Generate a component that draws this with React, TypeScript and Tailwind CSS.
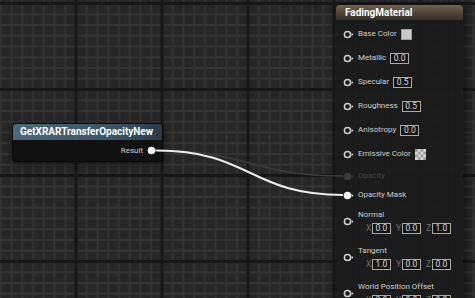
import React from "react";

const font = "font-['Roboto','Liberation_Sans',sans-serif]";

// small input pin: ring + arrow, filled when connected
const Pin = ({ filled = false, dim = false }: { filled?: boolean; dim?: boolean }) => {
  const c = dim ? "#3a3a3a" : filled ? "#f2f2f2" : "#cfcfcf";
  return (
    <svg width="11" height="9" viewBox="0 0 11 9" className="shrink-0">
      <circle
        cx="4.5"
        cy="4.5"
        r={filled || dim ? 3.8 : 3.1}
        fill={filled || dim ? c : "none"}
        stroke={filled || dim ? "none" : c}
        strokeWidth="1.5"
      />
      <polygon points="8.6,2.8 10.4,4.5 8.6,6.2" fill={c} />
    </svg>
  );
};

const NumBox = ({ v }: { v: string }) => (
  <div className="flex h-[11px] w-[19px] items-center justify-center border border-[#a9a9a9] bg-[#141414] text-[8.5px] leading-none text-[#dcdcdc]">
    {v}
  </div>
);

const Checker = () => (
  <svg width="11" height="11" viewBox="0 0 12 12" className="shrink-0">
    <rect width="12" height="12" fill="#d6d6d6" />
    {[0, 1, 2, 3].map((r) =>
      [0, 1, 2, 3].map((c) =>
        (r + c) % 2 === 0 ? (
          <rect key={`${r}-${c}`} x={c * 3} y={r * 3} width="3" height="3" fill="#9a9a9a" />
        ) : null
      )
    )}
  </svg>
);

const Row = ({
  label,
  children,
  h = "h-[24px]",
  filled,
  dim,
}: {
  label: string;
  children?: React.ReactNode;
  h?: string;
  filled?: boolean;
  dim?: boolean;
}) => (
  <div className={`flex items-center ${h}`}>
    <Pin filled={filled} dim={dim} />
    <span
      className={`ml-[4px] text-[8px] leading-none ${
        dim ? "text-[#484848]" : "text-[#cdcdcd]"
      }`}
    >
      {label}
    </span>
    {children && <div className="ml-[4px]">{children}</div>}
  </div>
);

const Vec = ({ label, vals }: { label: string; vals: string[] }) => (
  <div className="flex items-center">
    <Pin />
    <div className="ml-[4px] flex flex-col">
      <span className="h-[12px] text-[8px] leading-[12px] text-[#cdcdcd]">{label}</span>
      <div className="mt-[2px] flex items-center pl-[8px]">
        {["X", "Y", "Z"].map((a, i) => (
          <div key={a} className={`flex items-center ${i > 0 ? "ml-[5px]" : ""}`}>
            <span className="w-[6px] text-[8.5px] leading-none text-[#6e6e6e]">{a}</span>
            <NumBox v={vals[i]} />
          </div>
        ))}
      </div>
    </div>
  </div>
);

const Grid = () => {
  const minor = [1, 2, 3, 4, 5, 6, 7].map((i) => i * 10.75);
  return (
    <svg className="absolute inset-0" width="475" height="298">
      <defs>
        <pattern id="g" width="86" height="86" x="74.5" y="2" patternUnits="userSpaceOnUse">
          <rect width="86" height="86" fill="#262626" />
          {minor.map((m) => (
            <rect key={`v${m}`} x={m + 0.5} y="0" width="2" height="86" fill="#323232" />
          ))}
          {minor.map((m) => (
            <rect key={`h${m}`} x="0" y={m + 0.5} width="86" height="2" fill="#323232" />
          ))}
          <rect x="0" y="0" width="3" height="86" fill="#171717" />
          <rect x="0" y="0" width="86" height="3" fill="#171717" />
        </pattern>
      </defs>
      <rect width="475" height="298" fill="url(#g)" />
    </svg>
  );
};

export default function App() {
  return (
    <div className={`relative h-[298px] w-[475px] overflow-hidden bg-[#262626] ${font}`}>
      <Grid />

      {/* function call node */}
      <div className="absolute left-[12px] top-[123px] w-[151px] overflow-hidden rounded-[4px] border border-[#0a0a0a] bg-[#111111] shadow-[0_2px_6px_rgba(0,0,0,0.6)]">
        <div className="h-[16px] bg-[linear-gradient(90deg,#4d687b,#3a5264_70%,#2a3a46)] pl-[7px] text-[10px] font-bold leading-[16px] text-white">
          GetXRARTransferOpacityNew
        </div>
        <div className="flex h-[21px] items-center justify-end pr-[4px]">
          <span className="mr-[4px] text-[8px] leading-none text-[#cdcdcd]">Result</span>
          <Pin filled />
        </div>
      </div>

      {/* material result node */}
      <div className="absolute left-[336px] top-[5px] h-[300px] w-[127px] rounded-t-[4px] bg-[#1b1b1b]/[0.93] shadow-[3px_0_6px_rgba(0,0,0,0.55)]">
        <div className="h-[15px] rounded-t-[4px] bg-[linear-gradient(180deg,#72624f,#4b4036_60%,#35302b)] pl-[9px] text-[10px] font-bold leading-[15px] text-white">
          FadingMaterial
        </div>
        <div className="flex flex-col pl-[7px] pt-[2px]">
          <Row label="Base Color">
            <div className="h-[11px] w-[11px] border border-[#9e9e9e] bg-[#c9c9c9]" />
          </Row>
          <Row label="Metallic">
            <NumBox v="0.0" />
          </Row>
          <Row label="Specular">
            <NumBox v="0.5" />
          </Row>
          <Row label="Roughness">
            <NumBox v="0.5" />
          </Row>
          <Row label="Anisotropy">
            <NumBox v="0.0" />
          </Row>
          <Row label="Emissive Color">
            <Checker />
          </Row>
          <Row label="Opacity" h="h-[20px]" dim />
          <Row label="Opacity Mask" h="h-[18px]" filled />
          <div className="mt-[5px] flex flex-col gap-[11px]">
            <Vec label="Normal" vals={["0.0", "0.0", "1.0"]} />
            <Vec label="Tangent" vals={["1.0", "0.0", "0.0"]} />
            <Vec label="World Position Offset" vals={["0.0", "0.0", "0.0"]} />
          </div>
        </div>
      </div>

      {/* wires */}
      <svg className="pointer-events-none absolute inset-0" width="475" height="298">
        <path d="M157 150.5 C250 150.5 250 176 343 176" stroke="#3b3b3b" strokeWidth="1.5" fill="none" />
        <path d="M157 150.5 C250 150.5 250 195 343 195" stroke="#ececec" strokeWidth="2" fill="none" />
      </svg>
    </div>
  );
}
